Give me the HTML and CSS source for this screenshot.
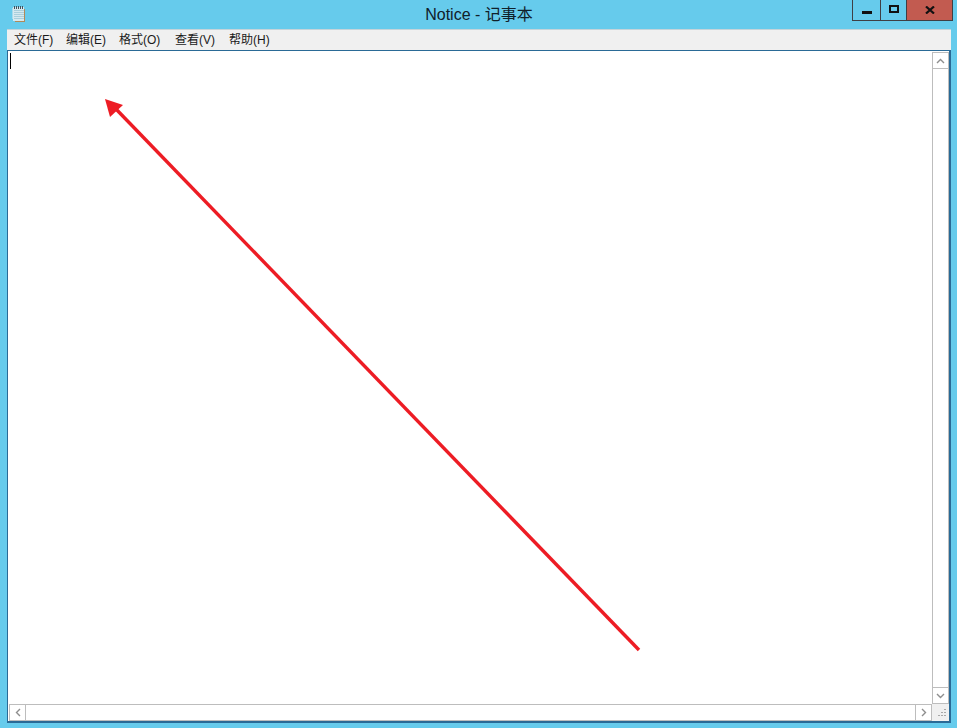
FILE: index.html
```html
<!DOCTYPE html>
<html lang="zh-CN">
<head>
  <meta charset="UTF-8" />
  <title>Notice - 记事本</title>
  <link rel="stylesheet" href="styles.css">
</head>
<body>
  <div class="window">
    <div class="titlebar">
      <svg class="app-icon" width="14" height="16" viewBox="0 0 14 16">
        <rect x="0" y="2" width="3" height="11" fill="#a5dcee"/>
        <rect x="3" y="3" width="10" height="13" fill="#b08a5a"/>
        <rect x="1" y="1" width="11" height="14" fill="#d6e9ef"/>
        <path d="M2 4.5h10M2 6.5h10M2 8.5h10M2 10.5h10M2 12.5h10" stroke="#a9cfdc" stroke-width="1"/>
        <path d="M2.5 0v3M4.5 0v3M6.5 0v3M8.5 0v3M10.5 0v3" stroke="#44525c" stroke-width="1"/>
      </svg>
      <div class="title">Notice - 记事本</div>
      <div class="controls">
        <div class="ctl ctl-min"><span class="min-glyph"></span></div>
        <div class="ctl ctl-max"><span class="max-glyph"></span></div>
        <div class="ctl ctl-close">
          <svg width="10" height="8" viewBox="0 0 10 8"><path d="M1 0.5L9 7.5M9 0.5L1 7.5" stroke="#111" stroke-width="2.2"/></svg>
        </div>
      </div>
    </div>
    <div class="menubar">
      <span class="menu">文件(F)</span>
      <span class="menu">编辑(E)</span>
      <span class="menu">格式(O)</span>
      <span class="menu">查看(V)</span>
      <span class="menu">帮助(H)</span>
    </div>
    <div class="editor">
      <div class="edit-row">
        <div class="text-area"><span class="caret"></span></div>
        <div class="vscroll">
          <div class="sb-btn">
            <svg width="9" height="6" viewBox="0 0 9 6"><path d="M1 5L4.5 1.5L8 5" fill="none" stroke="#8e8e8e" stroke-width="1.4"/></svg>
          </div>
          <div class="vtrack"></div>
          <div class="sb-btn">
            <svg width="9" height="6" viewBox="0 0 9 6"><path d="M1 1L4.5 4.5L8 1" fill="none" stroke="#8e8e8e" stroke-width="1.4"/></svg>
          </div>
        </div>
      </div>
      <div class="bottom-row">
        <div class="hscroll">
          <div class="sb-btn">
            <svg width="6" height="9" viewBox="0 0 6 9"><path d="M5 1L1.5 4.5L5 8" fill="none" stroke="#8e8e8e" stroke-width="1.4"/></svg>
          </div>
          <div class="htrack"></div>
          <div class="sb-btn">
            <svg width="6" height="9" viewBox="0 0 6 9"><path d="M1 1L4.5 4.5L1 8" fill="none" stroke="#8e8e8e" stroke-width="1.4"/></svg>
          </div>
        </div>
        <div class="grip">
          <svg width="12" height="12" viewBox="0 0 12 12">
            <path d="M9 2h2v1h-2zM6 5h2v1h-2zM9 5h2v1h-2zM3 8h2v1h-2zM6 8h2v1h-2zM9 8h2v1h-2z" fill="#a8a8a8"/>
          </svg>
        </div>
      </div>
    </div>
  </div>

  <!-- annotation drawn over the screenshot -->
  <svg class="arrow" width="957" height="728" viewBox="0 0 957 728">
    <line x1="639" y1="650" x2="115" y2="108" stroke="#ed1c24" stroke-width="3.4"/>
    <polygon points="105,99 123,105 110,117" fill="#ed1c24"/>
  </svg>
</body>
</html>
```

FILE: styles.css
```css
html, body {
  margin: 0;
  height: 100%;
  overflow: hidden;
}

body {
  font-family: "Liberation Sans", "Noto Sans CJK SC", sans-serif;
  background: #66cbec;
}

.window {
  height: 728px;
  display: flex;
  flex-direction: column;
  padding: 0 6px 5px 7px;
  box-sizing: border-box;
}

.titlebar {
  height: 29px;
  flex: none;
  display: flex;
  align-items: flex-start;
  position: relative;
}

.app-icon {
  margin: 6px 0 0 5px;
}

.title {
  position: absolute;
  left: 0;
  right: 0;
  top: 6px;
  text-align: center;
  font-size: 16px;
  line-height: 18px;
  color: #10202a;
}

.controls {
  margin-left: auto;
  margin-right: -2px;
  display: flex;
  height: 21px;
  box-sizing: border-box;
  border: 1px solid #3f3f44;
  border-top: none;
}

.ctl {
  display: flex;
  align-items: center;
  justify-content: center;
  box-sizing: border-box;
}

.ctl-min {
  width: 28px;
  border-right: 1px solid #3f3f44;
}

.ctl-max {
  width: 26px;
  border-right: 1px solid #3f3f44;
}

.ctl-close {
  width: 45px;
  background: #c25b50;
}

.min-glyph {
  width: 10px;
  height: 3px;
  background: #111;
  margin-top: 5px;
}

.max-glyph {
  width: 10px;
  height: 8px;
  box-sizing: border-box;
  border: 2px solid #111;
  margin-top: -2px;
}

.menubar {
  height: 21px;
  flex: none;
  display: grid;
  grid-template-columns: 52px 53px 56px 54px auto;
  align-items: center;
  background: #f0f0f0;
  border-top: 1px solid #c4d4da;
  box-sizing: border-box;
  padding: 0 0 3px 7px;
  font-size: 12px;
  color: #1a1a1a;
}

.editor {
  flex: 1;
  min-height: 0;
  display: flex;
  flex-direction: column;
  background: #fff;
  border: 1px solid #2a6a96;
  border-right-width: 2px;
  border-bottom-width: 2px;
}

.edit-row {
  flex: 1;
  min-height: 0;
  display: flex;
}

.text-area {
  flex: 1;
  padding: 2px 0 0 2px;
}

.caret {
  display: block;
  width: 1px;
  height: 16px;
  background: #000;
}

.vscroll {
  width: 17px;
  flex: none;
  display: flex;
  flex-direction: column;
  box-sizing: border-box;
  border: 1px solid #bdbdbd;
  margin-top: 1px;
}

.sb-btn {
  width: 15px;
  height: 15px;
  flex: none;
  display: flex;
  align-items: center;
  justify-content: center;
  background: #fff;
}

.vtrack {
  flex: 1;
  border-top: 1px solid #bdbdbd;
  border-bottom: 1px solid #bdbdbd;
}

.bottom-row {
  height: 17px;
  flex: none;
  display: flex;
}

.hscroll {
  flex: 1;
  display: flex;
  box-sizing: border-box;
  border: 1px solid #bdbdbd;
  margin-left: 1px;
}

.htrack {
  flex: 1;
  border-left: 1px solid #bdbdbd;
  border-right: 1px solid #bdbdbd;
}

.grip {
  width: 17px;
  flex: none;
  background: #f0f0f0;
  display: flex;
  align-items: flex-end;
  justify-content: flex-end;
  padding: 0 2px 2px 0;
  box-sizing: border-box;
}

.arrow {
  position: absolute;
  left: 0;
  top: 0;
  pointer-events: none;
}
```
